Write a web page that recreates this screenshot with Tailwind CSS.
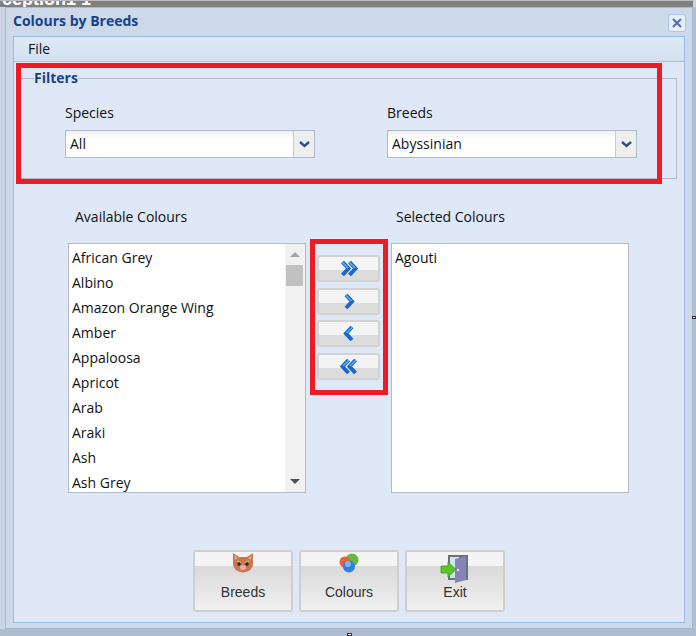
<!DOCTYPE html>
<html>
<head>
<meta charset="utf-8">
<script src="https://cdn.jsdelivr.net/npm/@tailwindcss/browser@4"></script>
<title>Colours by Breeds</title>
</head>
<body class="m-0">
<div class="relative w-[696px] h-[636px] overflow-hidden bg-[#c9d3e1] font-['Open_Sans',sans-serif] text-[14px] text-[#111]">
  <!-- background strip -->
  <div class="h-[7px] w-[693px] bg-[#808080] overflow-hidden border-t border-[#bbb]">
    <div class="ml-[2px] -mt-[9px] font-['Liberation_Sans'] font-bold text-[18px] leading-[14px] text-white">ception1 1</div>
  </div>
  <div class="flex h-[629px]">
    <div class="w-[5px] shrink-0 bg-[#c9d3e1]"></div>
    <!-- window -->
    <div class="w-[688px] h-[622px] shrink-0 border border-[#aab8cc] bg-[#cdd8e8] pl-[7px] pr-[7px] flex flex-col">
      <div class="h-[28px] shrink-0 flex items-center justify-between">
        <span class="font-bold text-[14px] leading-[18px] text-[#15428b] -mt-[2px]">Colours by Breeds</span>
        <span class="w-[18px] h-[18px] -mr-[1px] mt-[1px] rounded-[3px] border border-[#a9c6ee] bg-[#e6eefa] flex items-center justify-center">
          <svg width="12" height="12" viewBox="0 0 12 12"><path d="M2 2 L10 10 M10 2 L2 10" stroke="#4a6fa8" stroke-width="2" fill="none"/></svg>
        </span>
      </div>
      <!-- panel -->
      <div class="w-[672px] h-[587px] shrink-0 border border-[#99bce8] bg-[#dfe8f6] flex flex-col">
        <div class="h-[25px] shrink-0 border-b border-[#a9c0dc] bg-gradient-to-b from-[#dfe9f6] to-[#d3e1f1] pl-[14px] pb-[2px] flex items-center">File</div>
        <fieldset class="ml-[6px] mt-[7px] w-[657px] h-[110px] border border-[#b5b8c8] pl-[13px] pr-[0px]">
          <legend class="font-bold text-[14px] leading-[18px] text-[#15428b]">Filters</legend>
          <div class="flex pl-[31px] pt-[16px] gap-[72px]">
            <div class="w-[250px]">
              <div class="leading-[19px] mb-[8px]">Species</div>
              <div class="h-[28px] border border-[#b5b8c8] bg-gradient-to-b from-[#f0f0f0] via-white via-30% to-white flex">
                <div class="flex-1 pl-[4px] leading-[26px]">All</div>
                <div class="w-[21px] border-l border-[#c9c9d4] bg-[#eeeeee] flex items-center justify-center">
                  <svg width="11" height="7" viewBox="0 0 11 7"><path d="M1 1 L5.500 5 L10 1" stroke="#2f4f85" stroke-width="2.400" fill="none"/></svg>
                </div>
              </div>
            </div>
            <div class="w-[250px]">
              <div class="leading-[19px] mb-[8px]">Breeds</div>
              <div class="h-[28px] border border-[#b5b8c8] bg-gradient-to-b from-[#f0f0f0] via-white via-30% to-white flex">
                <div class="flex-1 pl-[4px] leading-[26px]">Abyssinian</div>
                <div class="w-[21px] border-l border-[#c9c9d4] bg-[#eeeeee] flex items-center justify-center">
                  <svg width="11" height="7" viewBox="0 0 11 7"><path d="M1 1 L5.500 5 L10 1" stroke="#2f4f85" stroke-width="2.400" fill="none"/></svg>
                </div>
              </div>
            </div>
          </div>
        </fieldset>
        <!-- lists -->
        <div class="flex pl-[54px] mt-[28px]">
          <div class="w-[238px]">
            <div class="pl-[7px] leading-[20px] mb-[16px]">Available Colours</div>
            <div class="h-[250px] border border-[#b5b8c8] bg-white flex overflow-hidden">
              <div class="flex-1 pl-[3px] pt-[1px] overflow-hidden">
                <div class="h-[25px] leading-[25px]">African Grey</div>
                <div class="h-[25px] leading-[25px]">Albino</div>
                <div class="h-[25px] leading-[25px]">Amazon Orange Wing</div>
                <div class="h-[25px] leading-[25px]">Amber</div>
                <div class="h-[25px] leading-[25px]">Appaloosa</div>
                <div class="h-[25px] leading-[25px]">Apricot</div>
                <div class="h-[25px] leading-[25px]">Arab</div>
                <div class="h-[25px] leading-[25px]">Araki</div>
                <div class="h-[25px] leading-[25px]">Ash</div>
                <div class="h-[25px] leading-[25px]">Ash Grey</div>
              </div>
              <div class="w-[20px] bg-[#f1f1f1] flex flex-col items-center justify-between pt-[8px] pb-[8px] relative">
                <div class="w-0 h-0 border-x-[5px] border-x-transparent border-b-[5px] border-b-[#a3a3a3]"></div>
                <div class="w-[17px] h-[21px] bg-[#c1c1c1] absolute top-[21px] left-[1px]"></div>
                <div class="w-0 h-0 border-x-[5px] border-x-transparent border-t-[5px] border-t-[#505050]"></div>
              </div>
            </div>
          </div>
          <div class="w-[85px] pt-[48px] pl-[11px] flex flex-col gap-[5.5px]">
            <div class="w-[63px] h-[27px] rounded-[3px] border-2 border-[#d2d2d2] bg-gradient-to-b from-[#f4f4f4] from-55% to-[#dcdcdc] to-55% flex items-center justify-center">
              <svg width="20" height="17" viewBox="0 0 20 17">
                <path d="M3 2 L9 8.500 L3 15 M10 2 L16 8.500 L10 15" transform="translate(0.500 0)" stroke="#1a68cc" stroke-width="4" fill="none"/>
                <path d="M2.500 2 L8.500 8 M9.500 2 L15.500 8" transform="translate(0.500 0)" stroke="#62aef2" stroke-width="1.500" fill="none"/>
              </svg>
            </div>
            <div class="w-[63px] h-[27px] rounded-[3px] border-2 border-[#d2d2d2] bg-gradient-to-b from-[#f4f4f4] from-55% to-[#dcdcdc] to-55% flex items-center justify-center">
              <svg width="12" height="17" viewBox="0 0 12 17">
                <path d="M3 2 L9 8.500 L3 15" stroke="#1a68cc" stroke-width="4" fill="none"/>
                <path d="M2.500 2 L8.500 8" stroke="#62aef2" stroke-width="1.500" fill="none"/>
              </svg>
            </div>
            <div class="w-[63px] h-[27px] rounded-[3px] border-2 border-[#d2d2d2] bg-gradient-to-b from-[#f4f4f4] from-55% to-[#dcdcdc] to-55% flex items-center justify-center">
              <svg width="12" height="17" viewBox="0 0 12 17">
                <path d="M9 2 L3 8.500 L9 15" stroke="#1a68cc" stroke-width="4" fill="none"/>
                <path d="M9.500 2 L3.500 8" stroke="#62aef2" stroke-width="1.500" fill="none"/>
              </svg>
            </div>
            <div class="w-[63px] h-[27px] rounded-[3px] border-2 border-[#d2d2d2] bg-gradient-to-b from-[#f4f4f4] from-55% to-[#dcdcdc] to-55% flex items-center justify-center">
              <svg width="20" height="17" viewBox="0 0 20 17">
                <path d="M16 2 L10 8.500 L16 15 M9 2 L3 8.500 L9 15" transform="translate(0.500 0)" stroke="#1a68cc" stroke-width="4" fill="none"/>
                <path d="M16.500 2 L10.500 8 M9.500 2 L3.500 8" transform="translate(0.500 0)" stroke="#62aef2" stroke-width="1.500" fill="none"/>
              </svg>
            </div>
          </div>
          <div class="w-[238px]">
            <div class="pl-[5px] leading-[20px] mb-[16px]">Selected Colours</div>
            <div class="h-[250px] border border-[#b5b8c8] bg-white pl-[3px] pt-[1px]">
              <div class="h-[25px] leading-[25px]">Agouti</div>
            </div>
          </div>
        </div>
        <!-- bottom buttons -->
        <div class="flex pl-[179px] mt-[57px] gap-[6px] font-['Liberation_Sans'] text-[#333]">
          <div class="w-[100px] h-[62px] rounded-[3px] border-2 border-[#cfcfcf] bg-gradient-to-b from-[#f4f4f4] from-25% via-[#dadada] via-25% to-[#f0f0f0] flex flex-col items-center">
            <svg class="mt-[1px]" width="22" height="20" viewBox="0 0 22 20">
              <path d="M1 0 L7 4 H15 L21 0 L21 11 Q21 18 11 19.500 Q1 18 1 11 Z" fill="#c9764a"/>
              <path d="M2 2 L6 5 L3 7 Z M20 2 L16 5 L19 7 Z" fill="#e8a277"/>
              <path d="M5 8 L9 10 M17 8 L13 10" stroke="#e9a47b" stroke-width="1.500"/>
              <circle cx="7" cy="11" r="1.700" fill="#222"/><circle cx="15" cy="11" r="1.700" fill="#222"/>
              <ellipse cx="11" cy="14.500" rx="3" ry="2.500" fill="#f0a8b0"/>
            </svg>
            <div class="mt-[10px] leading-[18px]">Breeds</div>
          </div>
          <div class="w-[100px] h-[62px] rounded-[3px] border-2 border-[#cfcfcf] bg-gradient-to-b from-[#f4f4f4] from-25% via-[#dadada] via-25% to-[#f0f0f0] flex flex-col items-center">
            <svg class="mt-[1px]" width="20" height="20" viewBox="0 0 20 20">
              <circle cx="13" cy="7" r="6.500" fill="#68b83f"/>
              <circle cx="6" cy="9" r="5.500" fill="#e8603a"/>
              <circle cx="10" cy="13.500" r="6" fill="#2f80e0"/>
              <circle cx="9" cy="11" r="3" fill="#78b8f2"/>
            </svg>
            <div class="mt-[10px] leading-[18px]">Colours</div>
          </div>
          <div class="w-[100px] h-[62px] rounded-[3px] border-2 border-[#cfcfcf] bg-gradient-to-b from-[#f4f4f4] from-25% via-[#dadada] via-25% to-[#f0f0f0] flex flex-col items-center">
            <svg class="mt-[2px]" width="30" height="30" viewBox="0 0 30 30">
              <path d="M8 1 H28 V26 H8 Z" fill="#6e7076"/>
              <path d="M10 3 H19 V24 H10 Z" fill="#cfe4f7"/>
              <path d="M15 5 L26 2 V26 L15 29 Z" fill="#8583b8"/>
              <circle cx="18" cy="16" r="1.200" fill="#e8e8f5"/>
              <path d="M1 12 H8 V8 L16 15.500 L8 23 V19 H1 Z" fill="#5cc22e" stroke="#3a9a1c" stroke-width="0.800"/>
            </svg>
            <div class="-mt-[1px] leading-[18px]">Exit</div>
          </div>
        </div>
      </div>
    </div>
    <div class="w-[3px] shrink-0 bg-[#b3bfd2]"></div>
  </div>
  <!-- bottom shade -->
  <div class="absolute left-0 right-0 bottom-0 h-[7px] bg-[#aebbd0]"></div>
  <!-- resize handles -->
  <div class="absolute left-[347px] bottom-0 w-[5px] h-[3px] bg-white border border-[#333]"></div>
  <div class="absolute left-[692px] top-[316px] w-[4px] h-[3px] bg-white border border-[#333]"></div>
  <!-- red annotations -->
  <div class="absolute left-[16px] top-[63px] w-[646px] h-[121px] border-[5px] border-[#ed1c24]"></div>
  <div class="absolute left-[310px] top-[239px] w-[78px] h-[156px] border-[5px] border-[#ed1c24]"></div>
</div>
</body>
</html>
